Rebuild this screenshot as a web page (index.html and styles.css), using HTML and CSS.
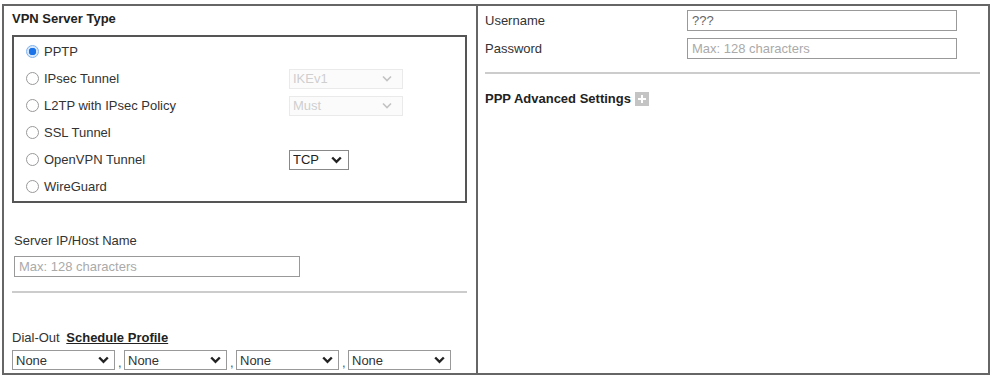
FILE: index.html
```html
<!DOCTYPE html>
<html lang="en">
<head>
    <meta charset="UTF-8">
    <title>VPN Profile</title>
    <link rel="stylesheet" href="styles.css">
</head>
<body>
    <div class="profile-table">
        <div class="cell left-cell">
            <div class="section-title">VPN Server Type</div>
            <div class="type-box">
                <label class="type-row">
                    <input type="radio" name="vpntype" checked>
                    <span class="type-name">PPTP</span>
                </label>
                <label class="type-row">
                    <input type="radio" name="vpntype">
                    <span class="type-name">IPsec Tunnel</span>
                    <select class="sel sel-disabled sel-wide" disabled><option>IKEv1</option></select>
                </label>
                <label class="type-row">
                    <input type="radio" name="vpntype">
                    <span class="type-name">L2TP with IPsec Policy</span>
                    <select class="sel sel-disabled sel-wide" disabled><option>Must</option></select>
                </label>
                <label class="type-row">
                    <input type="radio" name="vpntype">
                    <span class="type-name">SSL Tunnel</span>
                </label>
                <label class="type-row">
                    <input type="radio" name="vpntype">
                    <span class="type-name">OpenVPN Tunnel</span>
                    <select class="sel sel-small"><option>TCP</option></select>
                </label>
                <label class="type-row">
                    <input type="radio" name="vpntype">
                    <span class="type-name">WireGuard</span>
                </label>
            </div>

            <div class="server-field">
                <div class="field-label">Server IP/Host Name</div>
                <input type="text" class="txt txt-server" placeholder="Max: 128 characters">
            </div>

            <hr class="divider">

            <div class="dialout">
                <div class="dialout-label">Dial-Out <a href="#" class="link-bold">Schedule Profile</a></div>
                <div class="schedule-row">
                    <select class="sel sel-sched"><option>None</option></select><span class="comma">,</span>
                    <select class="sel sel-sched"><option>None</option></select><span class="comma">,</span>
                    <select class="sel sel-sched"><option>None</option></select><span class="comma">,</span>
                    <select class="sel sel-sched"><option>None</option></select>
                </div>
            </div>
        </div>

        <div class="cell right-cell">
            <div class="cred-row">
                <span class="cred-label">Username</span>
                <input type="text" class="txt txt-cred txt-value" value="???">
            </div>
            <div class="cred-row">
                <span class="cred-label">Password</span>
                <input type="password" class="txt txt-cred" placeholder="Max: 128 characters">
            </div>
            <hr class="divider divider-right">
            <div class="ppp-adv">
                PPP Advanced Settings
                <span class="plus-box"></span>
            </div>
        </div>
    </div>
</body>
</html>
```

FILE: styles.css
```css
body {
    margin: 0;
    font-family: "Liberation Sans", Arial, sans-serif;
    font-size: 13px;
    color: #333;
    background: #fff;
}
.profile-table {
    display: grid;
    grid-template-columns: 474px 1fr;
    width: 984px;
    height: 367px;
    margin: 4px 0 0 2px;
    border: 2px solid #666;
}
.cell {
    min-width: 0;
}
.left-cell {
    border-right: 2px solid #666;
    padding: 5px 8px 0 8px;
}
.section-title {
    font-weight: bold;
    line-height: 16px;
    margin-bottom: 8px;
    color: #222;
}
.type-box {
    border: 2px solid #555;
    width: 451px;
    padding: 1px 0;
}
.type-row {
    display: flex;
    align-items: center;
    height: 27px;
    padding-left: 12px;
}
.type-name {
    width: 245px;
    margin-left: 5px;
}
input[type="radio"] {
    appearance: none;
    -webkit-appearance: none;
    width: 13px;
    height: 13px;
    margin: 0;
    border: 1px solid #999;
    border-radius: 50%;
    background: #fff;
}
input[type="radio"]:checked {
    border-color: #7fb3f0;
    background: radial-gradient(circle, #1a73e8 0 3.5px, #d6e6fb 4px);
}
.sel {
    appearance: none;
    -webkit-appearance: none;
    font-family: inherit;
    font-size: 13px;
    height: 20px;
    padding: 0 0 0 3px;
    border: 1px solid #999;
    border-radius: 0;
    color: #444;
    background: #fff url("data:image/svg+xml,%3Csvg xmlns='http://www.w3.org/2000/svg' width='11' height='8' viewBox='0 0 11 8'%3E%3Cpath d='M1.2 1.5l4.3 4.3 4.3-4.3' fill='none' stroke='%23222' stroke-width='2.4'/%3E%3C/svg%3E") no-repeat right 5px center;
}
.sel-disabled {
    color: #bbb;
    border-color: #e2e2e2;
    background-color: #fafafa;
    background-image: url("data:image/svg+xml,%3Csvg xmlns='http://www.w3.org/2000/svg' width='10' height='7' viewBox='0 0 10 7'%3E%3Cpath d='M1 1.5l4 4 4-4' fill='none' stroke='%23aaa' stroke-width='1.6'/%3E%3C/svg%3E");
    background-position: right 10px center;
}
.sel-wide {
    width: 114px;
}
.sel-small {
    width: 60px;
    border-color: #888;
    color: #222;
    background-position: right 6px center;
}
.server-field {
    margin-top: 30px;
}
.field-label {
    line-height: 16px;
    margin-left: 2px;
}
.txt {
    font-family: inherit;
    font-size: 13px;
    height: 21px;
    padding: 0 4px;
    border: 1px solid #999;
    box-sizing: border-box;
    color: #555;
}
.txt::placeholder {
    color: #aaa;
}
.txt-server {
    width: 286px;
    margin: 7px 0 0 2px;
}
.divider {
    border: none;
    border-top: 2px solid #ccc;
    margin: 14px 0 0 0;
    width: 455px;
}
.dialout {
    margin-top: 37px;
}
.dialout-label {
    line-height: 16px;
}
.link-bold {
    font-weight: bold;
    color: #222;
    margin-left: 3px;
}
.schedule-row {
    display: flex;
    align-items: flex-end;
    margin-top: 4px;
}
.sel-sched {
    width: 103px;
    color: #333;
}
.comma {
    width: 6px;
    padding: 0 0 0 3px;
    line-height: 14px;
    color: #555;
}
.right-cell {
    padding: 0 8px 0 7px;
}
.cred-row {
    display: flex;
    align-items: center;
    height: 28px;
}
.cred-label {
    width: 202px;
}
.txt-cred {
    width: 270px;
    height: 21px;
}
.txt-value {
    color: #666;
}
.divider-right {
    width: 100%;
    margin-top: 10px;
}
.ppp-adv {
    display: flex;
    align-items: center;
    font-weight: bold;
    line-height: 16px;
    margin-top: 17px;
    color: #222;
}
.plus-box {
    display: inline-block;
    width: 14px;
    height: 14px;
    margin-left: 4px;
    background:
        linear-gradient(#fff, #fff) center / 8px 2px no-repeat,
        linear-gradient(#fff, #fff) center / 2px 8px no-repeat,
        #c4c4c4;
}
```
